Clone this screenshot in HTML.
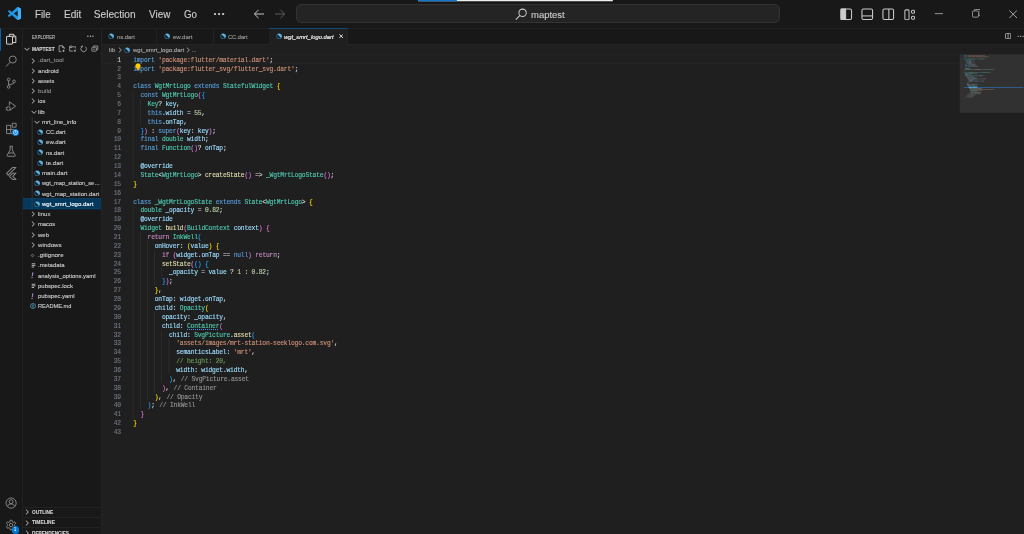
<!DOCTYPE html>
<html lang="en"><head><meta charset="utf-8"><title>wgt_smrt_logo.dart - maptest - Visual Studio Code</title>
<style>

html,body{margin:0;padding:0;background:#181818;overflow:hidden}
#root{will-change:transform;position:relative;width:1024px;height:534px;overflow:hidden;background:#181818;font-family:"Liberation Sans",sans-serif;color:#ccc;font-size:6px;line-height:1}
#root div,#root span,#root svg{position:absolute;white-space:pre}
#root .ln span, #root .cl span{position:static}
.menu{font-size:10.2px;top:9.3px;color:#ccc;line-height:12px}
.ui{font-size:6.05px;line-height:10.19px;height:10.19px;color:#ccc}
.dim{color:#8c8c8c}
.cl,.ln{-webkit-text-stroke:0.14px currentColor}
.ui{-webkit-text-stroke:0.12px currentColor}
.menu{-webkit-text-stroke:0.12px currentColor}
.cl{font-family:"Liberation Mono",monospace;font-size:6.3px;letter-spacing:-0.192px;line-height:8.866px;height:8.866px;left:133.20px;color:#d4d4d4}
.ln{font-family:"Liberation Mono",monospace;font-size:6.3px;letter-spacing:-0.192px;line-height:8.866px;height:8.866px;color:#6e7681;text-align:right;width:30px}

.k{color:#569cd6}
.c{color:#c586c0}
.s{color:#ce9178}
.t{color:#4ec9b0}
.f{color:#dcdcaa}
.v{color:#9cdcfe}
.n{color:#b5cea8}
.m{color:#6a9955}
.p{color:#d4d4d4}
.b1{color:#ffd700}
.b2{color:#da70d6}
.b3{color:#179fff}
.l{color:#929292}
.l{margin-left:0.9px}
.u{text-decoration:underline dotted #3794ff;text-decoration-thickness:0.7px;text-underline-offset:0.6px}
</style></head><body><div id="root">
<svg style="left:0;top:0" width="1024" height="534" viewBox="0 0 1024 534"><rect x="102.00" y="28.00" width="922.00" height="506.00" fill="#1f1f1f"/><rect x="0.00" y="0.00" width="1024.00" height="28.00" fill="#181818"/><rect x="0.00" y="28.00" width="1024.00" height="1.00" fill="#222222"/><rect x="418.20" y="0.00" width="194.60" height="1.25" fill="#eeeeee"/><rect x="418.20" y="0.00" width="38.70" height="1.25" fill="#1177d0"/><rect x="214.00" y="13.0" width="2" height="2" rx="0.6" fill="#c4c4c4"/><rect x="218.05" y="13.0" width="2" height="2" rx="0.6" fill="#c4c4c4"/><rect x="222.10" y="13.0" width="2" height="2" rx="0.6" fill="#c4c4c4"/><rect x="934.80" y="13.35" width="8.20" height="0.75" fill="#bdbdbd"/><rect x="22.00" y="29.00" width="1.00" height="505.00" fill="#212121"/><rect x="0.00" y="28.50" width="1.05" height="22.40" fill="#0b60a8"/><rect x="101.00" y="29.00" width="1.00" height="505.00" fill="#242424"/><rect x="87.20" y="35.6" width="1.3" height="1.3" rx="0.4" fill="#b4b4b4"/><rect x="89.75" y="35.6" width="1.3" height="1.3" rx="0.4" fill="#b4b4b4"/><rect x="92.30" y="35.6" width="1.3" height="1.3" rx="0.4" fill="#b4b4b4"/><rect x="23.00" y="198.44" width="78.00" height="10.74" fill="#04395e"/><rect x="23.00" y="198.44" width="78.00" height="0.50" fill="#0a4f80"/><rect x="23.00" y="208.68" width="78.00" height="0.50" fill="#0a4f80"/><rect x="31.80" y="116.82" width="0.70" height="92.16" fill="#3d3d3d"/><rect x="31.70" y="263.30" width="3.70" height="1.00" fill="#b4b4ae"/><rect x="31.70" y="264.90" width="3.70" height="1.00" fill="#b4b4ae"/><rect x="31.70" y="266.50" width="2.30" height="1.00" fill="#b4b4ae"/><rect x="31.70" y="283.78" width="3.70" height="1.00" fill="#b4b4ae"/><rect x="31.70" y="285.38" width="3.70" height="1.00" fill="#b4b4ae"/><rect x="31.70" y="286.98" width="2.30" height="1.00" fill="#b4b4ae"/><rect x="23.00" y="507.30" width="78.00" height="0.60" fill="#2b2b2b"/><rect x="23.00" y="517.40" width="78.00" height="0.60" fill="#2b2b2b"/><rect x="23.00" y="527.50" width="78.00" height="0.60" fill="#2b2b2b"/><rect x="102.00" y="29.00" width="922.00" height="15.00" fill="#181818"/><rect x="102.00" y="44.00" width="922.00" height="0.60" fill="#2b2b2b"/><rect x="156.50" y="29.00" width="0.60" height="15.00" fill="#2b2b2b"/><rect x="213.00" y="29.00" width="0.60" height="15.00" fill="#2b2b2b"/><rect x="268.90" y="29.00" width="0.60" height="15.00" fill="#2b2b2b"/><rect x="269.40" y="28.00" width="78.40" height="16.80" fill="#1f1f1f"/><rect x="269.40" y="28.10" width="78.40" height="0.70" fill="#0a5fa6"/><rect x="347.30" y="29.00" width="0.60" height="15.00" fill="#2b2b2b"/><rect x="1017.50" y="35.7" width="1.3" height="1.3" rx="0.4" fill="#a8a8a8"/><rect x="1019.95" y="35.7" width="1.3" height="1.3" rx="0.4" fill="#a8a8a8"/><rect x="1022.40" y="35.7" width="1.3" height="1.3" rx="0.4" fill="#a8a8a8"/><rect x="102.00" y="54.70" width="858.00" height="0.70" fill="#262626"/><rect x="102.00" y="62.87" width="858.00" height="0.70" fill="#262626"/><rect x="132.80" y="90.16" width="0.50" height="88.66" fill="#393939"/><rect x="139.98" y="99.03" width="0.50" height="26.60" fill="#393939"/><rect x="132.80" y="205.42" width="0.50" height="212.78" fill="#393939"/><rect x="139.98" y="232.02" width="0.50" height="177.32" fill="#393939"/><rect x="147.15" y="240.89" width="0.50" height="159.59" fill="#393939"/><rect x="154.33" y="249.75" width="0.50" height="35.46" fill="#393939"/><rect x="154.33" y="311.81" width="0.50" height="79.79" fill="#393939"/><rect x="161.50" y="267.48" width="0.50" height="8.87" fill="#393939"/><rect x="161.50" y="329.55" width="0.50" height="53.20" fill="#393939"/><rect x="168.68" y="338.41" width="0.50" height="35.46" fill="#393939"/><rect x="959.70" y="54.30" width="64.30" height="58.50" fill="#313131"/><rect x="963.90" y="87.15" width="59.40" height="0.75" fill="#2f6aa6"/><rect x="969.60" y="86.90" width="7.60" height="1.20" fill="#3f8ad4"/></svg>
<svg style="left:8.0px;top:7.35px" width="13.1" height="13.1" viewBox="0 0 100 100"><path fill-rule="evenodd" fill="#2296e6" d="M70.9 99.3C72.5 99.9 74.3 99.9 75.9 99.1L96.5 89.2C98.6 88.2 100 86 100 83.6V16.4C100 14 98.6 11.8 96.5 10.8L75.9 0.9C73.8-0.1 71.3 0.1 69.5 1.4C69.3 1.6 69 1.8 68.8 2.1L29.4 38 12.2 25C10.6 23.8 8.4 23.9 6.9 25.2L1.4 30.3C-0.5 31.9-0.5 34.8 1.4 36.4L16.2 50 1.4 63.6C-0.5 65.2-0.5 68.1 1.4 69.7L6.9 74.8C8.4 76.1 10.6 76.2 12.2 75L29.4 62 68.8 97.9C69.4 98.5 70.1 99 70.9 99.3ZM75 27.3 45.1 50 75 72.7V27.3Z"/><path fill="#3fb0f8" d="M75 0.5 96.5 10.8C98.6 11.8 100 14 100 16.4V83.6C100 86 98.6 88.2 96.5 89.2L75 99.5z"/></svg>
<div class="menu" style="left:34.50px;top:9.30px;transform:scaleX(0.9560);transform-origin:0 0;">File</div>
<div class="menu" style="left:63.60px;top:9.30px;transform:scaleX(0.9851);transform-origin:0 0;">Edit</div>
<div class="menu" style="left:93.70px;top:9.30px;">Selection</div>
<div class="menu" style="left:149.20px;top:9.30px;transform:scaleX(0.9723);transform-origin:0 0;">View</div>
<div class="menu" style="left:183.70px;top:9.30px;transform:scaleX(0.9563);transform-origin:0 0;">Go</div>
<svg style="left:253px;top:8.0px" width="12" height="12" viewBox="0 0 12 12" fill="none" stroke="#cccccc" stroke-width="0.95"><path d="M11 6H1.4M5.6 1.8 1.4 6l4.2 4.2"/></svg>
<svg style="left:273.8px;top:8.0px" width="12" height="12" viewBox="0 0 12 12" fill="none" stroke="#606060" stroke-width="0.95"><path d="M1 6h9.6M6.4 1.8 10.6 6 6.4 10.2"/></svg>
<div style="left:296.2px;top:4.1px;width:484.3px;height:19px;box-sizing:border-box;background:#242424;border:1px solid #333333;border-radius:5px"></div>
<svg style="left:514.6px;top:7.8px" width="12.3" height="12.3" viewBox="0 0 12 12" fill="none" stroke="#cccccc" stroke-width="1"><circle cx="7.4" cy="4.7" r="3.6"/><path d="M4.8 7.3 0.8 11.3"/></svg>
<div class="menu" style="left:531.00px;top:8.55px;font-size:9.6px;transform:scaleX(0.9871);transform-origin:0 0;">maptest</div>
<svg style="left:840px;top:8px" width="12.5" height="12.5" viewBox="0 0 12 12" fill="none" stroke="#cccccc" stroke-width="1"><rect x="0.9" y="0.9" width="10.2" height="10.2" rx="1.4"/><path d="M1 1h4.4v10H1z" fill="#cccccc"/></svg>
<svg style="left:861px;top:8px" width="12.5" height="12.5" viewBox="0 0 12 12" fill="none" stroke="#cccccc" stroke-width="1"><rect x="0.9" y="0.9" width="10.2" height="10.2" rx="1.4"/><path d="M1 7.6h10"/></svg>
<svg style="left:882px;top:8px" width="12.5" height="12.5" viewBox="0 0 12 12" fill="none" stroke="#cccccc" stroke-width="1"><rect x="0.9" y="0.9" width="10.2" height="10.2" rx="1.4"/><path d="M6.6 1v10"/></svg>
<svg style="left:903.8px;top:8.6px" width="11.6" height="11.6" viewBox="0 0 12 12" fill="none" stroke="#c4c4c4" stroke-width="1.05"><rect x="0.9" y="0.9" width="4.3" height="10.2" rx="1"/><rect x="7.7" y="1.2" width="3.2" height="3.2" rx="1.3"/><rect x="7.7" y="7.4" width="3.2" height="3.2" rx="1.3"/></svg>
<svg style="left:971.6px;top:9.2px" width="8.7" height="8.7" viewBox="0 0 10 10" fill="none" stroke="#bdbdbd" stroke-width="0.85"><rect x="0.5" y="2.3" width="7.1" height="7.1" rx="1.3"/><path d="M2.5 2.2V1.7a1.2 1.2 0 0 1 1.2-1.2h4.5a1.3 1.3 0 0 1 1.3 1.3v4.5a1.2 1.2 0 0 1-1.2 1.2H7.7"/></svg>
<svg style="left:1008.7px;top:9.75px" width="8.4" height="8.4" viewBox="0 0 10 10" fill="none" stroke="#c8c8c8" stroke-width="0.95"><path d="M0.4 0.4l9.2 9.2M9.6 0.4 0.4 9.6"/></svg>
<svg style="left:5.10px;top:33.00px" width="12.4" height="12.4" viewBox="0 0 24 24" fill="none" stroke="#d7d7d7" stroke-width="1.9" stroke-linejoin="round"><path d="M8.5 6.5V2.5h8l4.5 4.5v11.5h-6"/><path d="M16 2.5V7.5h5"/><rect x="3" y="6.5" width="11.5" height="15" rx="0.5"/></svg>
<svg style="left:5.40px;top:55.40px" width="12.4" height="12.4" viewBox="0 0 24 24" fill="none" stroke="#868686" stroke-width="1.9" stroke-linejoin="round"><circle cx="15" cy="8.8" r="6.8"/><path d="M10.2 13.8 2 22.3"/></svg>
<svg style="left:5.10px;top:77.40px" width="12.4" height="12.4" viewBox="0 0 24 24" fill="none" stroke="#868686" stroke-width="1.9" stroke-linejoin="round"><circle cx="7" cy="4.8" r="2.6"/><circle cx="7" cy="19.2" r="2.6"/><circle cx="17.5" cy="8.5" r="2.6"/><path d="M7 7.4v9.2M17.5 11.1c0 4-10.5 2-10.5 5.5"/></svg>
<svg style="left:5.10px;top:99.60px" width="12.4" height="12.4" viewBox="0 0 24 24" fill="none" stroke="#868686" stroke-width="1.9" stroke-linejoin="round"><path d="M8.5 3.5 20.5 12 10 19.5"/><path d="M8.5 3.5v7"/><circle cx="6.6" cy="16.6" r="3.6"/><path d="M1.5 14.5h2M1.5 19h2M9.8 19h2"/></svg>
<svg style="left:5.10px;top:122.40px" width="12.4" height="12.4" viewBox="0 0 24 24" fill="none" stroke="#868686" stroke-width="1.9" stroke-linejoin="round"><path d="M3 6.5h8.2v8.2H19.5V22.5H3z"/><path d="M11.2 14.7H3M11.2 14.7v7.8"/><rect x="14" y="2.5" width="7.5" height="7.5"/></svg>
<div style="left:11.50px;top:129.00px;width:7.20px;height:7.20px;background:#0078d4;border-radius:50%"></div>
<svg style="left:12.6px;top:130.1px" width="5" height="5" viewBox="0 0 10 10" fill="none" stroke="#ffffff" stroke-width="1.4"><circle cx="5" cy="5" r="4"/><path d="M5 2.4V5.2L6.8 6.4"/></svg>
<svg style="left:5.10px;top:144.80px" width="12.4" height="12.4" viewBox="0 0 24 24" fill="none" stroke="#868686" stroke-width="1.9" stroke-linejoin="round"><path d="M9 2.5h6M10 2.5v7L4 20.2c-.4.9 0 1.6 1 1.6h14c1 0 1.4-.7 1-1.6L14 9.5v-7"/><path d="M7 15.5h10"/></svg>
<svg style="left:4.80px;top:167.20px" width="12.8" height="12.8" viewBox="0 0 24 24" fill="none" stroke="#868686" stroke-width="1.9" stroke-linejoin="round"><path d="M14.3 0.8 2.9 12.1 6 15.2 20.5 0.8z"/><path d="M14.3 11.6 8.2 17.6l6.1 5.8h6.2l-6-5.8 6-6z"/></svg>
<svg style="left:5.20px;top:497.30px" width="12.2" height="12.2" viewBox="0 0 24 24" fill="none" stroke="#868686" stroke-width="1.9" stroke-linejoin="round"><circle cx="12" cy="12" r="10"/><circle cx="12" cy="9.3" r="3.8"/><path d="M5 19c1-4.5 4-5.2 7-5.2s6 .7 7 5.2"/></svg>
<svg style="left:5.20px;top:519.30px" width="12.2" height="12.2" viewBox="0 0 24 24" fill="none" stroke="#868686" stroke-width="1.9" stroke-linejoin="round"><circle cx="12" cy="12" r="3.4"/><path d="M10.2 2.5h3.6l.6 3 2 1.1 2.9-1 1.8 3.1-2.3 2v2.4l2.3 2-1.8 3.1-2.9-1-2 1.1-.6 3h-3.6l-.6-3-2-1.1-2.9 1-1.8-3.1 2.3-2v-2.4l-2.3-2 1.8-3.1 2.9 1 2-1.1z"/></svg>
<div style="left:11.50px;top:526.40px;width:7.20px;height:7.20px;background:#0078d4;border-radius:50%"></div>
<div style="left:11.5px;top:527.2px;width:7.2px;text-align:center;font-size:4.6px;line-height:5.6px;color:#fff">1</div>
<div class="ui" style="left:32.00px;top:31.70px;font-size:5.15px;color:#bdbdbd;transform:scaleX(0.8214);transform-origin:0 0;">EXPLORER</div>
<svg style="left:24.20px;top:47.10px" width="6" height="4.4" viewBox="0 0 6 4.4" fill="none" stroke="#c5c5c5" stroke-width="0.95"><path d="M0.6 0.9 3 3.4 5.4 0.9"/></svg>
<div class="ui" style="left:32.00px;top:44.30px;font-size:5.3px;font-weight:bold;color:#d6d6d6;transform:scaleX(0.8928);transform-origin:0 0;">MAPTEST</div>
<svg style="left:57.8px;top:45.4px" width="7.4" height="7.4" viewBox="0 0 16 16" fill="none" stroke="#c5c5c5" stroke-width="1.5"><path d="M9.5 1.5h-7v13h5M9.5 1.5l4 4v3M9.5 1.5v4h4"/><path d="M12 10v5M9.5 12.5h5"/></svg>
<svg style="left:68.6px;top:45.4px" width="7.8" height="7.4" viewBox="0 0 17 16" fill="none" stroke="#c5c5c5" stroke-width="1.5"><path d="M15 8V4H8L6.5 2.2H1.5v11h7"/><path d="M1.5 5.5h5L8 4"/><path d="M13 10v5M10.5 12.5h5"/></svg>
<svg style="left:79.8px;top:45.4px" width="7.4" height="7.4" viewBox="0 0 16 16" fill="none" stroke="#c5c5c5" stroke-width="1.5"><path d="M4.6 3.6A6 6 0 1 0 11.4 3.6"/><path d="M1.6 3.8h3.4V0.6"/></svg>
<svg style="left:91px;top:45.4px" width="7.6" height="7.4" viewBox="0 0 16 16" fill="none" stroke="#c5c5c5" stroke-width="1.4"><path d="M5 4V2h9.5v8h-2.2"/><rect x="1.5" y="5" width="10" height="8.5" rx="1.5"/><path d="M4 9.2h5"/></svg>
<svg style="left:30.90px;top:57.50px" width="4.4" height="6" viewBox="0 0 4.4 6" fill="none" stroke="#c5c5c5" stroke-width="0.95"><path d="M0.9 0.6 3.4 3 0.9 5.4"/></svg>
<div class="ui" style="left:38.40px;top:55.48px;color:#8c8c8c;transform:scaleX(1.0191);transform-origin:0 0;">.dart_tool</div>
<svg style="left:30.90px;top:67.74px" width="4.4" height="6" viewBox="0 0 4.4 6" fill="none" stroke="#c5c5c5" stroke-width="0.95"><path d="M0.9 0.6 3.4 3 0.9 5.4"/></svg>
<div class="ui" style="left:38.40px;top:65.72px;color:#cccccc;transform:scaleX(1.0254);transform-origin:0 0;">android</div>
<svg style="left:30.90px;top:77.98px" width="4.4" height="6" viewBox="0 0 4.4 6" fill="none" stroke="#c5c5c5" stroke-width="0.95"><path d="M0.9 0.6 3.4 3 0.9 5.4"/></svg>
<div class="ui" style="left:38.40px;top:75.96px;color:#cccccc;transform:scaleX(0.9265);transform-origin:0 0;">assets</div>
<svg style="left:30.90px;top:88.22px" width="4.4" height="6" viewBox="0 0 4.4 6" fill="none" stroke="#c5c5c5" stroke-width="0.95"><path d="M0.9 0.6 3.4 3 0.9 5.4"/></svg>
<div class="ui" style="left:38.40px;top:86.20px;color:#8c8c8c;transform:scaleX(1.0406);transform-origin:0 0;">build</div>
<svg style="left:30.90px;top:98.46px" width="4.4" height="6" viewBox="0 0 4.4 6" fill="none" stroke="#c5c5c5" stroke-width="0.95"><path d="M0.9 0.6 3.4 3 0.9 5.4"/></svg>
<div class="ui" style="left:38.40px;top:96.44px;color:#cccccc;transform:scaleX(0.9697);transform-origin:0 0;">ios</div>
<svg style="left:30.60px;top:109.50px" width="6" height="4.4" viewBox="0 0 6 4.4" fill="none" stroke="#c5c5c5" stroke-width="0.95"><path d="M0.6 0.9 3 3.4 5.4 0.9"/></svg>
<div class="ui" style="left:38.40px;top:106.68px;color:#cccccc;transform:scaleX(1.1052);transform-origin:0 0;">lib</div>
<svg style="left:34.35px;top:119.74px" width="6" height="4.4" viewBox="0 0 6 4.4" fill="none" stroke="#c5c5c5" stroke-width="0.95"><path d="M0.6 0.9 3 3.4 5.4 0.9"/></svg>
<div class="ui" style="left:42.00px;top:116.92px;color:#cccccc;transform:scaleX(0.9935);transform-origin:0 0;">mrt_line_info</div>
<svg style="left:37.00px;top:128.98px" width="6.4" height="6.4" viewBox="0 0 12 12"><circle cx="6" cy="6" r="5" fill="#3a8cc0"/><path d="M3.1 2.7A4.3 4.3 0 0 0 9.3 8.9z" fill="#0e1b25"/><path d="M4.4 1.5A4.8 4.8 0 0 1 10.5 7.6L9.3 8.9 3.1 2.7z" fill="#64b0da"/></svg>
<div class="ui" style="left:45.75px;top:127.16px;color:#cccccc;transform:scaleX(0.9403);transform-origin:0 0;">CC.dart</div>
<svg style="left:37.00px;top:139.22px" width="6.4" height="6.4" viewBox="0 0 12 12"><circle cx="6" cy="6" r="5" fill="#3a8cc0"/><path d="M3.1 2.7A4.3 4.3 0 0 0 9.3 8.9z" fill="#0e1b25"/><path d="M4.4 1.5A4.8 4.8 0 0 1 10.5 7.6L9.3 8.9 3.1 2.7z" fill="#64b0da"/></svg>
<div class="ui" style="left:45.75px;top:137.40px;color:#cccccc;transform:scaleX(1.0154);transform-origin:0 0;">ew.dart</div>
<svg style="left:37.00px;top:149.46px" width="6.4" height="6.4" viewBox="0 0 12 12"><circle cx="6" cy="6" r="5" fill="#3a8cc0"/><path d="M3.1 2.7A4.3 4.3 0 0 0 9.3 8.9z" fill="#0e1b25"/><path d="M4.4 1.5A4.8 4.8 0 0 1 10.5 7.6L9.3 8.9 3.1 2.7z" fill="#64b0da"/></svg>
<div class="ui" style="left:45.75px;top:147.64px;color:#cccccc;transform:scaleX(0.9784);transform-origin:0 0;">ns.dart</div>
<svg style="left:37.00px;top:159.70px" width="6.4" height="6.4" viewBox="0 0 12 12"><circle cx="6" cy="6" r="5" fill="#3a8cc0"/><path d="M3.1 2.7A4.3 4.3 0 0 0 9.3 8.9z" fill="#0e1b25"/><path d="M4.4 1.5A4.8 4.8 0 0 1 10.5 7.6L9.3 8.9 3.1 2.7z" fill="#64b0da"/></svg>
<div class="ui" style="left:45.75px;top:157.88px;color:#cccccc;transform:scaleX(1.0084);transform-origin:0 0;">te.dart</div>
<svg style="left:33.55px;top:169.94px" width="6.4" height="6.4" viewBox="0 0 12 12"><circle cx="6" cy="6" r="5" fill="#3a8cc0"/><path d="M3.1 2.7A4.3 4.3 0 0 0 9.3 8.9z" fill="#0e1b25"/><path d="M4.4 1.5A4.8 4.8 0 0 1 10.5 7.6L9.3 8.9 3.1 2.7z" fill="#64b0da"/></svg>
<div class="ui" style="left:42.00px;top:168.12px;color:#cccccc;transform:scaleX(1.0112);transform-origin:0 0;">main.dart</div>
<svg style="left:33.55px;top:180.18px" width="6.4" height="6.4" viewBox="0 0 12 12"><circle cx="6" cy="6" r="5" fill="#3a8cc0"/><path d="M3.1 2.7A4.3 4.3 0 0 0 9.3 8.9z" fill="#0e1b25"/><path d="M4.4 1.5A4.8 4.8 0 0 1 10.5 7.6L9.3 8.9 3.1 2.7z" fill="#64b0da"/></svg>
<div class="ui" style="left:42.00px;top:178.36px;color:#cccccc;transform:scaleX(0.9412);transform-origin:0 0;">wgt_map_station_se…</div>
<svg style="left:33.55px;top:190.42px" width="6.4" height="6.4" viewBox="0 0 12 12"><circle cx="6" cy="6" r="5" fill="#3a8cc0"/><path d="M3.1 2.7A4.3 4.3 0 0 0 9.3 8.9z" fill="#0e1b25"/><path d="M4.4 1.5A4.8 4.8 0 0 1 10.5 7.6L9.3 8.9 3.1 2.7z" fill="#64b0da"/></svg>
<div class="ui" style="left:42.00px;top:188.60px;color:#cccccc;transform:scaleX(0.9909);transform-origin:0 0;">wgt_map_station.dart</div>
<svg style="left:33.55px;top:200.66px" width="6.4" height="6.4" viewBox="0 0 12 12"><circle cx="6" cy="6" r="5" fill="#3a8cc0"/><path d="M3.1 2.7A4.3 4.3 0 0 0 9.3 8.9z" fill="#0e1b25"/><path d="M4.4 1.5A4.8 4.8 0 0 1 10.5 7.6L9.3 8.9 3.1 2.7z" fill="#64b0da"/></svg>
<div class="ui" style="left:42.00px;top:198.84px;color:#ffffff;">wgt_smrt_logo.dart</div>
<svg style="left:30.90px;top:211.10px" width="4.4" height="6" viewBox="0 0 4.4 6" fill="none" stroke="#c5c5c5" stroke-width="0.95"><path d="M0.9 0.6 3.4 3 0.9 5.4"/></svg>
<div class="ui" style="left:38.40px;top:209.08px;color:#cccccc;transform:scaleX(1.0050);transform-origin:0 0;">linux</div>
<svg style="left:30.90px;top:221.34px" width="4.4" height="6" viewBox="0 0 4.4 6" fill="none" stroke="#c5c5c5" stroke-width="0.95"><path d="M0.9 0.6 3.4 3 0.9 5.4"/></svg>
<div class="ui" style="left:38.40px;top:219.32px;color:#cccccc;transform:scaleX(0.9656);transform-origin:0 0;">macos</div>
<svg style="left:30.90px;top:231.58px" width="4.4" height="6" viewBox="0 0 4.4 6" fill="none" stroke="#c5c5c5" stroke-width="0.95"><path d="M0.9 0.6 3.4 3 0.9 5.4"/></svg>
<div class="ui" style="left:38.40px;top:229.56px;color:#cccccc;transform:scaleX(0.9915);transform-origin:0 0;">web</div>
<svg style="left:30.90px;top:241.82px" width="4.4" height="6" viewBox="0 0 4.4 6" fill="none" stroke="#c5c5c5" stroke-width="0.95"><path d="M0.9 0.6 3.4 3 0.9 5.4"/></svg>
<div class="ui" style="left:38.40px;top:239.80px;color:#cccccc;transform:scaleX(1.0171);transform-origin:0 0;">windows</div>
<svg style="left:30.30px;top:252.56px" width="5" height="5" viewBox="0 0 10 10"><rect x="2" y="2" width="6" height="6" transform="rotate(45 5 5)" fill="#4b5a63"/><circle cx="5" cy="5" r="1.1" fill="#181818"/></svg>
<div class="ui" style="left:38.40px;top:250.04px;color:#cccccc;transform:scaleX(1.0285);transform-origin:0 0;">.gitignore</div>
<div class="ui" style="left:38.40px;top:260.28px;color:#cccccc;transform:scaleX(0.9849);transform-origin:0 0;">.metadata</div>
<svg style="left:31.40px;top:272.34px" width="3" height="6.4" viewBox="0 0 6 12.8"><path d="M3.6 0.8 2.6 8" stroke="#a87fd0" stroke-width="2.3" fill="none"/><circle cx="2.1" cy="11" r="1.4" fill="#a87fd0"/></svg>
<div class="ui" style="left:38.40px;top:270.52px;color:#cccccc;transform:scaleX(0.9720);transform-origin:0 0;">analysis_options.yaml</div>
<div class="ui" style="left:38.40px;top:280.76px;color:#cccccc;transform:scaleX(0.9888);transform-origin:0 0;">pubspec.lock</div>
<svg style="left:31.40px;top:292.82px" width="3" height="6.4" viewBox="0 0 6 12.8"><path d="M3.6 0.8 2.6 8" stroke="#a87fd0" stroke-width="2.3" fill="none"/><circle cx="2.1" cy="11" r="1.4" fill="#a87fd0"/></svg>
<div class="ui" style="left:38.40px;top:291.00px;color:#cccccc;transform:scaleX(0.9809);transform-origin:0 0;">pubspec.yaml</div>
<svg style="left:29.90px;top:303.26px" width="6" height="6" viewBox="0 0 10 10" fill="none" stroke="#5aa9cc" stroke-width="1.2"><circle cx="5" cy="5" r="4.1"/><path d="M5 2.3v5.4" stroke-width="1.5"/></svg>
<div class="ui" style="left:38.40px;top:301.24px;color:#cccccc;transform:scaleX(0.9290);transform-origin:0 0;">README.md</div>
<svg style="left:25.20px;top:509.40px" width="4.4" height="6" viewBox="0 0 4.4 6" fill="none" stroke="#c5c5c5" stroke-width="0.95"><path d="M0.9 0.6 3.4 3 0.9 5.4"/></svg>
<div class="ui" style="left:31.70px;top:507.35px;font-size:5.3px;font-weight:bold;color:#d0d0d0;transform:scaleX(0.9118);transform-origin:0 0;">OUTLINE</div>
<svg style="left:25.20px;top:519.50px" width="4.4" height="6" viewBox="0 0 4.4 6" fill="none" stroke="#c5c5c5" stroke-width="0.95"><path d="M0.9 0.6 3.4 3 0.9 5.4"/></svg>
<div class="ui" style="left:31.70px;top:517.45px;font-size:5.3px;font-weight:bold;color:#d0d0d0;transform:scaleX(0.9264);transform-origin:0 0;">TIMELINE</div>
<svg style="left:25.20px;top:529.60px" width="4.4" height="6" viewBox="0 0 4.4 6" fill="none" stroke="#c5c5c5" stroke-width="0.95"><path d="M0.9 0.6 3.4 3 0.9 5.4"/></svg>
<div class="ui" style="left:31.70px;top:527.55px;font-size:5.3px;font-weight:bold;color:#d0d0d0;transform:scaleX(0.8852);transform-origin:0 0;">DEPENDENCIES</div>
<svg style="left:107.80px;top:33.40px" width="6.4" height="6.4" viewBox="0 0 12 12"><circle cx="6" cy="6" r="5" fill="#3a8cc0"/><path d="M3.1 2.7A4.3 4.3 0 0 0 9.3 8.9z" fill="#0e1b25"/><path d="M4.4 1.5A4.8 4.8 0 0 1 10.5 7.6L9.3 8.9 3.1 2.7z" fill="#64b0da"/></svg>
<div class="ui" style="left:116.70px;top:31.80px;color:#9d9d9d;transform:scaleX(0.9676);transform-origin:0 0;">ns.dart</div>
<svg style="left:163.80px;top:33.40px" width="6.4" height="6.4" viewBox="0 0 12 12"><circle cx="6" cy="6" r="5" fill="#3a8cc0"/><path d="M3.1 2.7A4.3 4.3 0 0 0 9.3 8.9z" fill="#0e1b25"/><path d="M4.4 1.5A4.8 4.8 0 0 1 10.5 7.6L9.3 8.9 3.1 2.7z" fill="#64b0da"/></svg>
<div class="ui" style="left:172.80px;top:31.80px;color:#9d9d9d;transform:scaleX(0.9949);transform-origin:0 0;">ew.dart</div>
<svg style="left:219.80px;top:33.40px" width="6.4" height="6.4" viewBox="0 0 12 12"><circle cx="6" cy="6" r="5" fill="#3a8cc0"/><path d="M3.1 2.7A4.3 4.3 0 0 0 9.3 8.9z" fill="#0e1b25"/><path d="M4.4 1.5A4.8 4.8 0 0 1 10.5 7.6L9.3 8.9 3.1 2.7z" fill="#64b0da"/></svg>
<div class="ui" style="left:228.40px;top:31.80px;color:#9d9d9d;transform:scaleX(0.9403);transform-origin:0 0;">CC.dart</div>
<svg style="left:275.50px;top:33.40px" width="6.4" height="6.4" viewBox="0 0 12 12"><circle cx="6" cy="6" r="5" fill="#3a8cc0"/><path d="M3.1 2.7A4.3 4.3 0 0 0 9.3 8.9z" fill="#0e1b25"/><path d="M4.4 1.5A4.8 4.8 0 0 1 10.5 7.6L9.3 8.9 3.1 2.7z" fill="#64b0da"/></svg>
<div class="ui" style="left:284.40px;top:31.80px;color:#ffffff;font-style:italic;transform:scaleX(0.9643);transform-origin:0 0;">wgt_smrt_logo.dart</div>
<svg style="left:338.7px;top:34.3px" width="4.4" height="4.4" viewBox="0 0 10 10" fill="none" stroke="#f0f0f0" stroke-width="2.1"><path d="M1 1l8 8M9 1 1 9"/></svg>
<svg style="left:1005.2px;top:32.8px" width="6.2" height="6.2" viewBox="0 0 12 12" fill="none" stroke="#c5c5c5" stroke-width="1.4"><rect x="1" y="1" width="10" height="10" rx="1.2"/><path d="M6 1v10"/></svg>
<div class="ui" style="left:108.90px;top:44.90px;color:#a0a0a0;transform:scaleX(1.0557);transform-origin:0 0;">lib</div>
<svg style="left:117.80px;top:47.00px" width="4.4" height="6" viewBox="0 0 4.4 6" fill="none" stroke="#a0a0a0" stroke-width="0.95"><path d="M0.9 0.6 3.4 3 0.9 5.4"/></svg>
<svg style="left:124.40px;top:46.80px" width="6.4" height="6.4" viewBox="0 0 12 12"><circle cx="6" cy="6" r="5" fill="#3a8cc0"/><path d="M3.1 2.7A4.3 4.3 0 0 0 9.3 8.9z" fill="#0e1b25"/><path d="M4.4 1.5A4.8 4.8 0 0 1 10.5 7.6L9.3 8.9 3.1 2.7z" fill="#64b0da"/></svg>
<div class="ui" style="left:133.20px;top:44.90px;color:#a9a9a9;transform:scaleX(0.9954);transform-origin:0 0;">wgt_smrt_logo.dart</div>
<svg style="left:186.40px;top:47.00px" width="4.4" height="6" viewBox="0 0 4.4 6" fill="none" stroke="#a0a0a0" stroke-width="0.95"><path d="M0.9 0.6 3.4 3 0.9 5.4"/></svg>
<div class="ui" style="left:192.00px;top:44.90px;color:#a9a9a9;transform:scaleX(0.6946);transform-origin:0 0;">…</div>
<div class="ln" style="left:90.90px;top:56.70px;color:#cccccc">1</div>
<div class="cl" style="top:56.70px"><span class="k">import</span> <span class="s">&#x27;package:flutter/material.dart&#x27;</span>;</div>
<div class="ln" style="left:90.90px;top:65.57px;">2</div>
<div class="cl" style="top:65.57px"><span class="k">import</span> <span class="s">&#x27;package:flutter_svg/flutter_svg.dart&#x27;</span>;</div>
<div class="ln" style="left:90.90px;top:74.43px;">3</div>
<div class="ln" style="left:90.90px;top:83.30px;">4</div>
<div class="cl" style="top:83.30px"><span class="k">class</span> <span class="t">WgtMrtLogo</span> <span class="k">extends</span> <span class="t">StatefulWidget</span> <span class="b1">{</span></div>
<div class="ln" style="left:90.90px;top:92.16px;">5</div>
<div class="cl" style="top:92.16px">  <span class="k">const</span> <span class="t">WgtMrtLogo</span><span class="b2">(</span><span class="b3">{</span></div>
<div class="ln" style="left:90.90px;top:101.03px;">6</div>
<div class="cl" style="top:101.03px">    <span class="t">Key</span>? <span class="v">key</span>,</div>
<div class="ln" style="left:90.90px;top:109.90px;">7</div>
<div class="cl" style="top:109.90px">    <span class="k">this</span>.<span class="v">width</span> = <span class="n">55</span>,</div>
<div class="ln" style="left:90.90px;top:118.76px;">8</div>
<div class="cl" style="top:118.76px">    <span class="k">this</span>.<span class="v">onTap</span>,</div>
<div class="ln" style="left:90.90px;top:127.63px;">9</div>
<div class="cl" style="top:127.63px">  <span class="b3">}</span><span class="b2">)</span> : <span class="k">super</span><span class="b2">(</span><span class="v">key</span>: <span class="v">key</span><span class="b2">)</span>;</div>
<div class="ln" style="left:90.90px;top:136.49px;">10</div>
<div class="cl" style="top:136.49px">  <span class="k">final</span> <span class="t">double</span> <span class="v">width</span>;</div>
<div class="ln" style="left:90.90px;top:145.36px;">11</div>
<div class="cl" style="top:145.36px">  <span class="k">final</span> <span class="t">Function</span><span class="b2">(</span><span class="b2">)</span>? <span class="v">onTap</span>;</div>
<div class="ln" style="left:90.90px;top:154.23px;">12</div>
<div class="ln" style="left:90.90px;top:163.09px;">13</div>
<div class="cl" style="top:163.09px">  <span class="v">@override</span></div>
<div class="ln" style="left:90.90px;top:171.96px;">14</div>
<div class="cl" style="top:171.96px">  <span class="t">State</span>&lt;<span class="t">WgtMrtLogo</span>&gt; <span class="f">createState</span><span class="b2">(</span><span class="b2">)</span> =&gt; <span class="t">_WgtMrtLogoState</span><span class="b2">(</span><span class="b2">)</span>;</div>
<div class="ln" style="left:90.90px;top:180.82px;">15</div>
<div class="cl" style="top:180.82px"><span class="b1">}</span></div>
<div class="ln" style="left:90.90px;top:189.69px;">16</div>
<div class="ln" style="left:90.90px;top:198.56px;">17</div>
<div class="cl" style="top:198.56px"><span class="k">class</span> <span class="t">_WgtMrtLogoState</span> <span class="k">extends</span> <span class="t">State</span>&lt;<span class="t">WgtMrtLogo</span>&gt; <span class="b1">{</span></div>
<div class="ln" style="left:90.90px;top:207.42px;">18</div>
<div class="cl" style="top:207.42px">  <span class="t">double</span> <span class="v">_opacity</span> = <span class="n">0.82</span>;</div>
<div class="ln" style="left:90.90px;top:216.29px;">19</div>
<div class="cl" style="top:216.29px">  <span class="v">@override</span></div>
<div class="ln" style="left:90.90px;top:225.15px;">20</div>
<div class="cl" style="top:225.15px">  <span class="t">Widget</span> <span class="f">build</span><span class="b2">(</span><span class="t">BuildContext</span> <span class="v">context</span><span class="b2">)</span> <span class="b2">{</span></div>
<div class="ln" style="left:90.90px;top:234.02px;">21</div>
<div class="cl" style="top:234.02px">    <span class="c">return</span> <span class="t">InkWell</span><span class="b3">(</span></div>
<div class="ln" style="left:90.90px;top:242.89px;">22</div>
<div class="cl" style="top:242.89px">      <span class="v">onHover</span>: <span class="b1">(</span><span class="v">value</span><span class="b1">)</span> <span class="b1">{</span></div>
<div class="ln" style="left:90.90px;top:251.75px;">23</div>
<div class="cl" style="top:251.75px">        <span class="c">if</span> <span class="b2">(</span><span class="v">widget</span>.<span class="v">onTap</span> == <span class="k">null</span><span class="b2">)</span> <span class="c">return</span>;</div>
<div class="ln" style="left:90.90px;top:260.62px;">24</div>
<div class="cl" style="top:260.62px">        <span class="f">setState</span><span class="b2">(</span><span class="b3">(</span><span class="b3">)</span> <span class="b3">{</span></div>
<div class="ln" style="left:90.90px;top:269.48px;">25</div>
<div class="cl" style="top:269.48px">          <span class="v">_opacity</span> = <span class="v">value</span> ? <span class="n">1</span> : <span class="n">0.82</span>;</div>
<div class="ln" style="left:90.90px;top:278.35px;">26</div>
<div class="cl" style="top:278.35px">        <span class="b3">}</span><span class="b2">)</span>;</div>
<div class="ln" style="left:90.90px;top:287.22px;">27</div>
<div class="cl" style="top:287.22px">      <span class="b1">}</span>,</div>
<div class="ln" style="left:90.90px;top:296.08px;">28</div>
<div class="cl" style="top:296.08px">      <span class="v">onTap</span>: <span class="v">widget</span>.<span class="v">onTap</span>,</div>
<div class="ln" style="left:90.90px;top:304.95px;">29</div>
<div class="cl" style="top:304.95px">      <span class="v">child</span>: <span class="t">Opacity</span><span class="b1">(</span></div>
<div class="ln" style="left:90.90px;top:313.81px;">30</div>
<div class="cl" style="top:313.81px">        <span class="v">opacity</span>: <span class="v">_opacity</span>,</div>
<div class="ln" style="left:90.90px;top:322.68px;">31</div>
<div class="cl" style="top:322.68px">        <span class="v">child</span>: <span class="t u">Container</span><span class="b2">(</span></div>
<div class="ln" style="left:90.90px;top:331.55px;">32</div>
<div class="cl" style="top:331.55px">          <span class="v">child</span>: <span class="t">SvgPicture</span>.<span class="f">asset</span><span class="b3">(</span></div>
<div class="ln" style="left:90.90px;top:340.41px;">33</div>
<div class="cl" style="top:340.41px">            <span class="s">&#x27;assets/images/mrt-station-seeklogo.com.svg&#x27;</span>,</div>
<div class="ln" style="left:90.90px;top:349.28px;">34</div>
<div class="cl" style="top:349.28px">            <span class="v">semanticsLabel</span>: <span class="s">&#x27;mrt&#x27;</span>,</div>
<div class="ln" style="left:90.90px;top:358.14px;">35</div>
<div class="cl" style="top:358.14px">            <span class="m">// height: 20,</span></div>
<div class="ln" style="left:90.90px;top:367.01px;">36</div>
<div class="cl" style="top:367.01px">            <span class="v">width</span>: <span class="v">widget</span>.<span class="v">width</span>,</div>
<div class="ln" style="left:90.90px;top:375.88px;">37</div>
<div class="cl" style="top:375.88px">          <span class="b3">)</span>,<span class="l"> // SvgPicture.asset</span></div>
<div class="ln" style="left:90.90px;top:384.74px;">38</div>
<div class="cl" style="top:384.74px">        <span class="b2">)</span>,<span class="l"> // Container</span></div>
<div class="ln" style="left:90.90px;top:393.61px;">39</div>
<div class="cl" style="top:393.61px">      <span class="b1">)</span>,<span class="l"> // Opacity</span></div>
<div class="ln" style="left:90.90px;top:402.47px;">40</div>
<div class="cl" style="top:402.47px">    <span class="b3">)</span>;<span class="l"> // InkWell</span></div>
<div class="ln" style="left:90.90px;top:411.34px;">41</div>
<div class="cl" style="top:411.34px">  <span class="b2">}</span></div>
<div class="ln" style="left:90.90px;top:420.21px;">42</div>
<div class="cl" style="top:420.21px"><span class="b1">}</span></div>
<div class="ln" style="left:90.90px;top:429.07px;">43</div>
<svg style="left:134.5px;top:62.6px" width="6" height="7.8" viewBox="0 0 12 15.6"><path d="M6 0.4a5.3 5.3 0 0 0-3.2 9.5v1.6h6.4V9.9A5.3 5.3 0 0 0 6 0.4z" fill="#ffcc00"/><rect x="3.2" y="11.6" width="5.6" height="3.2" fill="#d9a436"/></svg>
<svg style="left:0;top:0" width="1024" height="534" viewBox="0 0 1024 534"><rect x="963.90" y="55.30" width="3.20" height="0.8" fill="#569cd6" opacity="0.36"/><rect x="967.63" y="55.30" width="16.53" height="0.8" fill="#ce9178" opacity="0.36"/><rect x="984.17" y="55.30" width="0.53" height="0.8" fill="#d4d4d4" opacity="0.36"/><rect x="963.90" y="56.36" width="3.20" height="0.8" fill="#569cd6" opacity="0.36"/><rect x="967.63" y="56.36" width="20.27" height="0.8" fill="#ce9178" opacity="0.36"/><rect x="987.90" y="56.36" width="0.53" height="0.8" fill="#d4d4d4" opacity="0.36"/><rect x="963.90" y="58.47" width="2.67" height="0.8" fill="#569cd6" opacity="0.36"/><rect x="967.10" y="58.47" width="5.33" height="0.8" fill="#4ec9b0" opacity="0.36"/><rect x="972.97" y="58.47" width="3.73" height="0.8" fill="#569cd6" opacity="0.36"/><rect x="977.23" y="58.47" width="7.47" height="0.8" fill="#4ec9b0" opacity="0.36"/><rect x="985.23" y="58.47" width="0.53" height="0.8" fill="#ffd700" opacity="0.36"/><rect x="964.97" y="59.53" width="2.67" height="0.8" fill="#569cd6" opacity="0.36"/><rect x="968.17" y="59.53" width="5.33" height="0.8" fill="#4ec9b0" opacity="0.36"/><rect x="973.50" y="59.53" width="0.53" height="0.8" fill="#da70d6" opacity="0.36"/><rect x="974.03" y="59.53" width="0.53" height="0.8" fill="#179fff" opacity="0.36"/><rect x="966.03" y="60.58" width="1.60" height="0.8" fill="#4ec9b0" opacity="0.36"/><rect x="967.63" y="60.58" width="0.53" height="0.8" fill="#d4d4d4" opacity="0.36"/><rect x="968.70" y="60.58" width="1.60" height="0.8" fill="#9cdcfe" opacity="0.36"/><rect x="970.30" y="60.58" width="0.53" height="0.8" fill="#d4d4d4" opacity="0.36"/><rect x="966.03" y="61.64" width="2.13" height="0.8" fill="#569cd6" opacity="0.36"/><rect x="968.17" y="61.64" width="0.53" height="0.8" fill="#d4d4d4" opacity="0.36"/><rect x="968.70" y="61.64" width="2.67" height="0.8" fill="#9cdcfe" opacity="0.36"/><rect x="971.90" y="61.64" width="0.53" height="0.8" fill="#d4d4d4" opacity="0.36"/><rect x="972.97" y="61.64" width="1.07" height="0.8" fill="#b5cea8" opacity="0.36"/><rect x="974.03" y="61.64" width="0.53" height="0.8" fill="#d4d4d4" opacity="0.36"/><rect x="966.03" y="62.70" width="2.13" height="0.8" fill="#569cd6" opacity="0.36"/><rect x="968.17" y="62.70" width="0.53" height="0.8" fill="#d4d4d4" opacity="0.36"/><rect x="968.70" y="62.70" width="2.67" height="0.8" fill="#9cdcfe" opacity="0.36"/><rect x="971.37" y="62.70" width="0.53" height="0.8" fill="#d4d4d4" opacity="0.36"/><rect x="964.97" y="63.76" width="0.53" height="0.8" fill="#179fff" opacity="0.36"/><rect x="965.50" y="63.76" width="0.53" height="0.8" fill="#da70d6" opacity="0.36"/><rect x="966.57" y="63.76" width="0.53" height="0.8" fill="#d4d4d4" opacity="0.36"/><rect x="967.63" y="63.76" width="2.67" height="0.8" fill="#569cd6" opacity="0.36"/><rect x="970.30" y="63.76" width="0.53" height="0.8" fill="#da70d6" opacity="0.36"/><rect x="970.83" y="63.76" width="1.60" height="0.8" fill="#9cdcfe" opacity="0.36"/><rect x="972.43" y="63.76" width="0.53" height="0.8" fill="#d4d4d4" opacity="0.36"/><rect x="973.50" y="63.76" width="1.60" height="0.8" fill="#9cdcfe" opacity="0.36"/><rect x="975.10" y="63.76" width="0.53" height="0.8" fill="#da70d6" opacity="0.36"/><rect x="975.63" y="63.76" width="0.53" height="0.8" fill="#d4d4d4" opacity="0.36"/><rect x="964.97" y="64.81" width="2.67" height="0.8" fill="#569cd6" opacity="0.36"/><rect x="968.17" y="64.81" width="3.20" height="0.8" fill="#4ec9b0" opacity="0.36"/><rect x="971.90" y="64.81" width="2.67" height="0.8" fill="#9cdcfe" opacity="0.36"/><rect x="974.57" y="64.81" width="0.53" height="0.8" fill="#d4d4d4" opacity="0.36"/><rect x="964.97" y="65.87" width="2.67" height="0.8" fill="#569cd6" opacity="0.36"/><rect x="968.17" y="65.87" width="4.27" height="0.8" fill="#4ec9b0" opacity="0.36"/><rect x="972.43" y="65.87" width="0.53" height="0.8" fill="#da70d6" opacity="0.36"/><rect x="972.97" y="65.87" width="0.53" height="0.8" fill="#da70d6" opacity="0.36"/><rect x="973.50" y="65.87" width="0.53" height="0.8" fill="#d4d4d4" opacity="0.36"/><rect x="974.57" y="65.87" width="2.67" height="0.8" fill="#9cdcfe" opacity="0.36"/><rect x="977.23" y="65.87" width="0.53" height="0.8" fill="#d4d4d4" opacity="0.36"/><rect x="964.97" y="67.98" width="4.80" height="0.8" fill="#9cdcfe" opacity="0.36"/><rect x="964.97" y="69.04" width="2.67" height="0.8" fill="#4ec9b0" opacity="0.36"/><rect x="967.63" y="69.04" width="0.53" height="0.8" fill="#d4d4d4" opacity="0.36"/><rect x="968.17" y="69.04" width="5.33" height="0.8" fill="#4ec9b0" opacity="0.36"/><rect x="973.50" y="69.04" width="0.53" height="0.8" fill="#d4d4d4" opacity="0.36"/><rect x="974.57" y="69.04" width="5.87" height="0.8" fill="#dcdcaa" opacity="0.36"/><rect x="980.43" y="69.04" width="0.53" height="0.8" fill="#da70d6" opacity="0.36"/><rect x="980.97" y="69.04" width="0.53" height="0.8" fill="#da70d6" opacity="0.36"/><rect x="982.03" y="69.04" width="1.07" height="0.8" fill="#d4d4d4" opacity="0.36"/><rect x="983.63" y="69.04" width="8.53" height="0.8" fill="#4ec9b0" opacity="0.36"/><rect x="992.16" y="69.04" width="0.53" height="0.8" fill="#da70d6" opacity="0.36"/><rect x="992.70" y="69.04" width="0.53" height="0.8" fill="#da70d6" opacity="0.36"/><rect x="993.23" y="69.04" width="0.53" height="0.8" fill="#d4d4d4" opacity="0.36"/><rect x="963.90" y="70.10" width="0.53" height="0.8" fill="#ffd700" opacity="0.36"/><rect x="963.90" y="72.21" width="2.67" height="0.8" fill="#569cd6" opacity="0.36"/><rect x="967.10" y="72.21" width="8.53" height="0.8" fill="#4ec9b0" opacity="0.36"/><rect x="976.17" y="72.21" width="3.73" height="0.8" fill="#569cd6" opacity="0.36"/><rect x="980.43" y="72.21" width="2.67" height="0.8" fill="#4ec9b0" opacity="0.36"/><rect x="983.10" y="72.21" width="0.53" height="0.8" fill="#d4d4d4" opacity="0.36"/><rect x="983.63" y="72.21" width="5.33" height="0.8" fill="#4ec9b0" opacity="0.36"/><rect x="988.97" y="72.21" width="0.53" height="0.8" fill="#d4d4d4" opacity="0.36"/><rect x="990.03" y="72.21" width="0.53" height="0.8" fill="#ffd700" opacity="0.36"/><rect x="964.97" y="73.27" width="3.20" height="0.8" fill="#4ec9b0" opacity="0.36"/><rect x="968.70" y="73.27" width="4.27" height="0.8" fill="#9cdcfe" opacity="0.36"/><rect x="973.50" y="73.27" width="0.53" height="0.8" fill="#d4d4d4" opacity="0.36"/><rect x="974.57" y="73.27" width="2.13" height="0.8" fill="#b5cea8" opacity="0.36"/><rect x="976.70" y="73.27" width="0.53" height="0.8" fill="#d4d4d4" opacity="0.36"/><rect x="964.97" y="74.33" width="4.80" height="0.8" fill="#9cdcfe" opacity="0.36"/><rect x="964.97" y="75.38" width="3.20" height="0.8" fill="#4ec9b0" opacity="0.36"/><rect x="968.70" y="75.38" width="2.67" height="0.8" fill="#dcdcaa" opacity="0.36"/><rect x="971.37" y="75.38" width="0.53" height="0.8" fill="#da70d6" opacity="0.36"/><rect x="971.90" y="75.38" width="6.40" height="0.8" fill="#4ec9b0" opacity="0.36"/><rect x="978.83" y="75.38" width="3.73" height="0.8" fill="#9cdcfe" opacity="0.36"/><rect x="982.57" y="75.38" width="0.53" height="0.8" fill="#da70d6" opacity="0.36"/><rect x="983.63" y="75.38" width="0.53" height="0.8" fill="#da70d6" opacity="0.36"/><rect x="966.03" y="76.44" width="3.20" height="0.8" fill="#c586c0" opacity="0.36"/><rect x="969.77" y="76.44" width="3.73" height="0.8" fill="#4ec9b0" opacity="0.36"/><rect x="973.50" y="76.44" width="0.53" height="0.8" fill="#179fff" opacity="0.36"/><rect x="967.10" y="77.50" width="3.73" height="0.8" fill="#9cdcfe" opacity="0.36"/><rect x="970.83" y="77.50" width="0.53" height="0.8" fill="#d4d4d4" opacity="0.36"/><rect x="971.90" y="77.50" width="0.53" height="0.8" fill="#ffd700" opacity="0.36"/><rect x="972.43" y="77.50" width="2.67" height="0.8" fill="#9cdcfe" opacity="0.36"/><rect x="975.10" y="77.50" width="0.53" height="0.8" fill="#ffd700" opacity="0.36"/><rect x="976.17" y="77.50" width="0.53" height="0.8" fill="#ffd700" opacity="0.36"/><rect x="968.17" y="78.55" width="1.07" height="0.8" fill="#c586c0" opacity="0.36"/><rect x="969.77" y="78.55" width="0.53" height="0.8" fill="#da70d6" opacity="0.36"/><rect x="970.30" y="78.55" width="3.20" height="0.8" fill="#9cdcfe" opacity="0.36"/><rect x="973.50" y="78.55" width="0.53" height="0.8" fill="#d4d4d4" opacity="0.36"/><rect x="974.03" y="78.55" width="2.67" height="0.8" fill="#9cdcfe" opacity="0.36"/><rect x="977.23" y="78.55" width="1.07" height="0.8" fill="#d4d4d4" opacity="0.36"/><rect x="978.83" y="78.55" width="2.13" height="0.8" fill="#569cd6" opacity="0.36"/><rect x="980.97" y="78.55" width="0.53" height="0.8" fill="#da70d6" opacity="0.36"/><rect x="982.03" y="78.55" width="3.20" height="0.8" fill="#c586c0" opacity="0.36"/><rect x="985.23" y="78.55" width="0.53" height="0.8" fill="#d4d4d4" opacity="0.36"/><rect x="968.17" y="79.61" width="4.27" height="0.8" fill="#dcdcaa" opacity="0.36"/><rect x="972.43" y="79.61" width="0.53" height="0.8" fill="#da70d6" opacity="0.36"/><rect x="972.97" y="79.61" width="0.53" height="0.8" fill="#179fff" opacity="0.36"/><rect x="973.50" y="79.61" width="0.53" height="0.8" fill="#179fff" opacity="0.36"/><rect x="974.57" y="79.61" width="0.53" height="0.8" fill="#179fff" opacity="0.36"/><rect x="969.23" y="80.67" width="4.27" height="0.8" fill="#9cdcfe" opacity="0.36"/><rect x="974.03" y="80.67" width="0.53" height="0.8" fill="#d4d4d4" opacity="0.36"/><rect x="975.10" y="80.67" width="2.67" height="0.8" fill="#9cdcfe" opacity="0.36"/><rect x="978.30" y="80.67" width="0.53" height="0.8" fill="#d4d4d4" opacity="0.36"/><rect x="979.37" y="80.67" width="0.53" height="0.8" fill="#b5cea8" opacity="0.36"/><rect x="980.43" y="80.67" width="0.53" height="0.8" fill="#d4d4d4" opacity="0.36"/><rect x="981.50" y="80.67" width="2.13" height="0.8" fill="#b5cea8" opacity="0.36"/><rect x="983.63" y="80.67" width="0.53" height="0.8" fill="#d4d4d4" opacity="0.36"/><rect x="968.17" y="81.72" width="0.53" height="0.8" fill="#179fff" opacity="0.36"/><rect x="968.70" y="81.72" width="0.53" height="0.8" fill="#da70d6" opacity="0.36"/><rect x="969.23" y="81.72" width="0.53" height="0.8" fill="#d4d4d4" opacity="0.36"/><rect x="967.10" y="82.78" width="0.53" height="0.8" fill="#ffd700" opacity="0.36"/><rect x="967.63" y="82.78" width="0.53" height="0.8" fill="#d4d4d4" opacity="0.36"/><rect x="967.10" y="83.84" width="2.67" height="0.8" fill="#9cdcfe" opacity="0.36"/><rect x="969.77" y="83.84" width="0.53" height="0.8" fill="#d4d4d4" opacity="0.36"/><rect x="970.83" y="83.84" width="3.20" height="0.8" fill="#9cdcfe" opacity="0.36"/><rect x="974.03" y="83.84" width="0.53" height="0.8" fill="#d4d4d4" opacity="0.36"/><rect x="974.57" y="83.84" width="2.67" height="0.8" fill="#9cdcfe" opacity="0.36"/><rect x="977.23" y="83.84" width="0.53" height="0.8" fill="#d4d4d4" opacity="0.36"/><rect x="967.10" y="84.90" width="2.67" height="0.8" fill="#9cdcfe" opacity="0.36"/><rect x="969.77" y="84.90" width="0.53" height="0.8" fill="#d4d4d4" opacity="0.36"/><rect x="970.83" y="84.90" width="3.73" height="0.8" fill="#4ec9b0" opacity="0.36"/><rect x="974.57" y="84.90" width="0.53" height="0.8" fill="#ffd700" opacity="0.36"/><rect x="968.17" y="85.95" width="3.73" height="0.8" fill="#9cdcfe" opacity="0.36"/><rect x="971.90" y="85.95" width="0.53" height="0.8" fill="#d4d4d4" opacity="0.36"/><rect x="972.97" y="85.95" width="4.27" height="0.8" fill="#9cdcfe" opacity="0.36"/><rect x="977.23" y="85.95" width="0.53" height="0.8" fill="#d4d4d4" opacity="0.36"/><rect x="968.17" y="87.01" width="2.67" height="0.8" fill="#9cdcfe" opacity="0.36"/><rect x="970.83" y="87.01" width="0.53" height="0.8" fill="#d4d4d4" opacity="0.36"/><rect x="971.90" y="87.01" width="4.80" height="0.8" fill="#4ec9b0" opacity="0.36"/><rect x="976.70" y="87.01" width="0.53" height="0.8" fill="#da70d6" opacity="0.36"/><rect x="969.23" y="88.07" width="2.67" height="0.8" fill="#9cdcfe" opacity="0.36"/><rect x="971.90" y="88.07" width="0.53" height="0.8" fill="#d4d4d4" opacity="0.36"/><rect x="972.97" y="88.07" width="5.33" height="0.8" fill="#4ec9b0" opacity="0.36"/><rect x="978.30" y="88.07" width="0.53" height="0.8" fill="#d4d4d4" opacity="0.36"/><rect x="978.83" y="88.07" width="2.67" height="0.8" fill="#dcdcaa" opacity="0.36"/><rect x="981.50" y="88.07" width="0.53" height="0.8" fill="#179fff" opacity="0.36"/><rect x="970.30" y="89.12" width="23.47" height="0.8" fill="#ce9178" opacity="0.36"/><rect x="993.76" y="89.12" width="0.53" height="0.8" fill="#d4d4d4" opacity="0.36"/><rect x="970.30" y="90.18" width="7.47" height="0.8" fill="#9cdcfe" opacity="0.36"/><rect x="977.77" y="90.18" width="0.53" height="0.8" fill="#d4d4d4" opacity="0.36"/><rect x="978.83" y="90.18" width="2.67" height="0.8" fill="#ce9178" opacity="0.36"/><rect x="981.50" y="90.18" width="0.53" height="0.8" fill="#d4d4d4" opacity="0.36"/><rect x="970.30" y="91.24" width="7.47" height="0.8" fill="#6a9955" opacity="0.36"/><rect x="970.30" y="92.29" width="2.67" height="0.8" fill="#9cdcfe" opacity="0.36"/><rect x="972.97" y="92.29" width="0.53" height="0.8" fill="#d4d4d4" opacity="0.36"/><rect x="974.03" y="92.29" width="3.20" height="0.8" fill="#9cdcfe" opacity="0.36"/><rect x="977.23" y="92.29" width="0.53" height="0.8" fill="#d4d4d4" opacity="0.36"/><rect x="977.77" y="92.29" width="2.67" height="0.8" fill="#9cdcfe" opacity="0.36"/><rect x="980.43" y="92.29" width="0.53" height="0.8" fill="#d4d4d4" opacity="0.36"/><rect x="969.23" y="93.35" width="0.53" height="0.8" fill="#179fff" opacity="0.36"/><rect x="969.77" y="93.35" width="0.53" height="0.8" fill="#d4d4d4" opacity="0.36"/><rect x="970.83" y="93.35" width="10.13" height="0.8" fill="#929292" opacity="0.36"/><rect x="968.17" y="94.41" width="0.53" height="0.8" fill="#da70d6" opacity="0.36"/><rect x="968.70" y="94.41" width="0.53" height="0.8" fill="#d4d4d4" opacity="0.36"/><rect x="969.77" y="94.41" width="6.40" height="0.8" fill="#929292" opacity="0.36"/><rect x="967.10" y="95.47" width="0.53" height="0.8" fill="#ffd700" opacity="0.36"/><rect x="967.63" y="95.47" width="0.53" height="0.8" fill="#d4d4d4" opacity="0.36"/><rect x="968.70" y="95.47" width="5.33" height="0.8" fill="#929292" opacity="0.36"/><rect x="966.03" y="96.52" width="0.53" height="0.8" fill="#179fff" opacity="0.36"/><rect x="966.57" y="96.52" width="0.53" height="0.8" fill="#d4d4d4" opacity="0.36"/><rect x="967.63" y="96.52" width="5.33" height="0.8" fill="#929292" opacity="0.36"/><rect x="964.97" y="97.58" width="0.53" height="0.8" fill="#da70d6" opacity="0.36"/><rect x="963.90" y="98.64" width="0.53" height="0.8" fill="#ffd700" opacity="0.36"/></svg>
</div></body></html>
